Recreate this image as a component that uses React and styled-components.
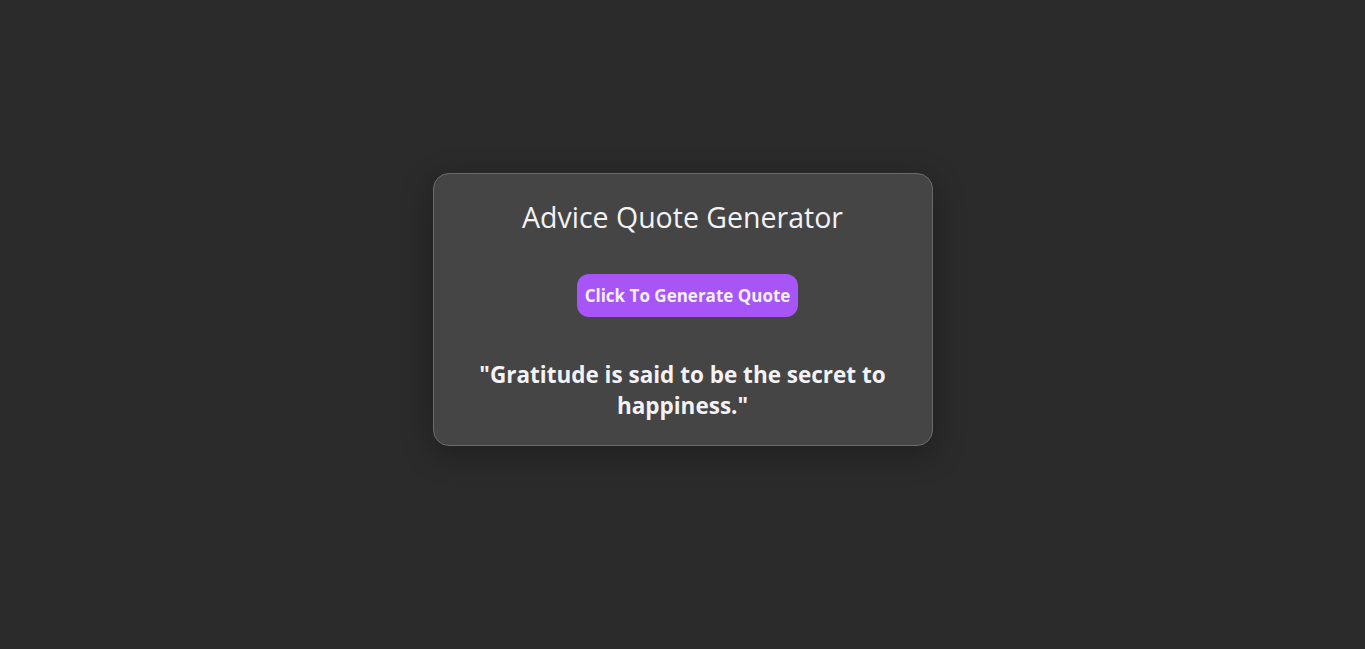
import React from "react";
import styled, { createGlobalStyle } from "styled-components";

const Global = createGlobalStyle`
  html, body { margin: 0; padding: 0; background: #2b2b2b; }
  body { font-family: "Segoe UI", "Open Sans", "Noto Sans", sans-serif; color: #f2f2f7; }
`;

const Page = styled.main`
  min-height: 649px;
  display: flex;
  align-items: center;
  justify-content: center;
  padding-bottom: 30px;
  box-sizing: border-box;
`;

const Card = styled.section`
  width: 500px;
  box-sizing: border-box;
  background: #454545;
  border: 1px solid #6b6b6b;
  border-radius: 16px;
  box-shadow: 0 8px 32px rgba(0, 0, 0, 0.3);
  padding: 24px 32px 24px;
  display: flex;
  flex-direction: column;
  align-items: center;
  text-align: center;
`;

const Title = styled.h1`
  margin: 0;
  font-size: 28.5px;
  font-weight: 400;
  line-height: 38px;
`;

const Button = styled.button`
  margin: 38px 0 0 10px;
  height: 43px;
  padding: 0 8px;
  border: none;
  border-radius: 12px;
  background: #a855f7;
  color: #f5f0ff;
  font-family: inherit;
  font-size: 17px;
  font-weight: 700;
  cursor: pointer;
`;

const Quote = styled.p`
  margin: 42px 0 0;
  font-size: 22.5px;
  font-weight: 700;
  line-height: 31px;
`;

export default function App() {
  return (
    <>
      <Global />
      <Page>
        <Card>
          <Title>Advice Quote Generator</Title>
          <Button>Click To Generate Quote</Button>
          <Quote>"Gratitude is said to be the secret to happiness."</Quote>
        </Card>
      </Page>
    </>
  );
}
